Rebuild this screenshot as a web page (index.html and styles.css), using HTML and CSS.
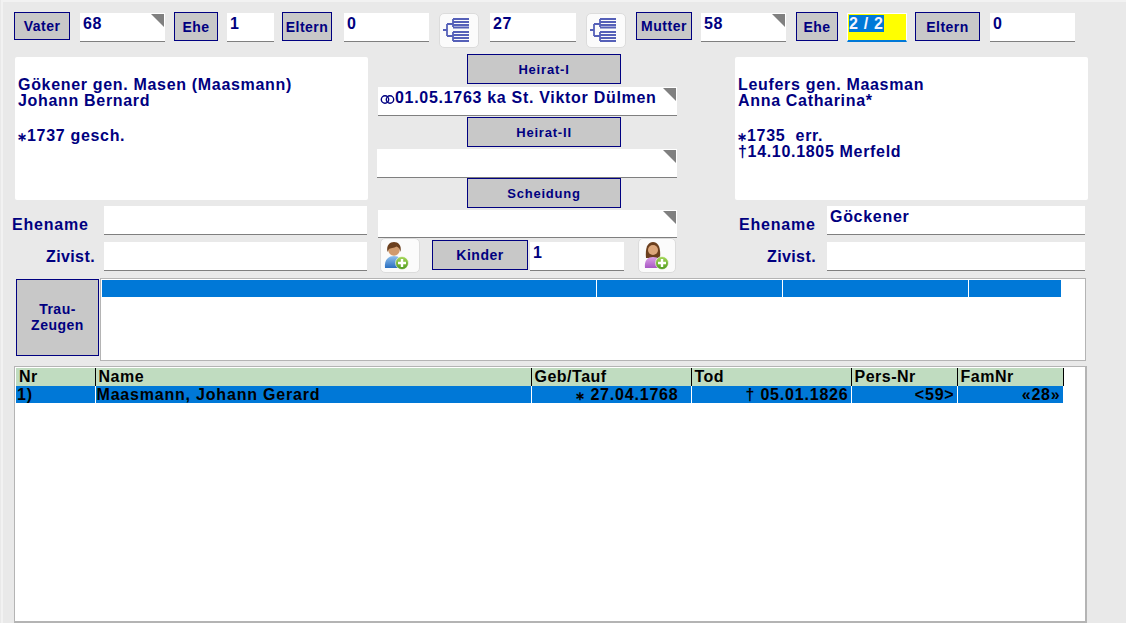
FILE: index.html
```html
<!DOCTYPE html>
<html lang="de">
<head>
<meta charset="utf-8">
<title>Familie</title>
<link rel="stylesheet" href="styles.css">
</head>
<body>
<div class="page">
  <div class="top">
    <button class="btn w-vater">Vater</button>
    <div class="field corner w-85 ml-10">68</div>
    <button class="btn w-ehe ml-9 tall">Ehe</button>
    <div class="field w-47 ml-9">1</div>
    <button class="btn w-eltern ml-8 tall">Eltern</button>
    <div class="field w-85 ml-12">0</div>
    <button class="icon w-icon ml-10"><svg class="treeicon" width="27" height="25" viewBox="0 0 27 25"><path class="tree" d="M0 12h4M4 6v12M4 6h6M4 18h6M10 1v8M10 14v9M10 1h16M10 4h16M10 7h16M10 9.500h16M10 14h16M10 17h16M10 20h16M10 23h16"/></svg></button>
    <div class="field w-86 ml-11">27</div>
    <button class="icon w-icon ml-10"><svg class="treeicon" width="27" height="25" viewBox="0 0 27 25"><path class="tree" d="M0 12h4M4 6v12M4 6h6M4 18h6M10 1v8M10 14v9M10 1h16M10 4h16M10 7h16M10 9.500h16M10 14h16M10 17h16M10 20h16M10 23h16"/></svg></button>
    <button class="btn w-vater ml-10">Mutter</button>
    <div class="field corner w-85 ml-9">58</div>
    <button class="btn w-ehe2 ml-10 tall">Ehe</button>
    <div class="field w-60 ml-9 active"><span class="sel">2 / 2</span></div>
    <button class="btn w-eltern2 ml-8 tall">Eltern</button>
    <div class="field w-85 ml-10">0</div>
  </div>

  <div class="mid">
    <div class="side left">
      <div class="person">
        <p>Gökener gen. Masen (Maasmann)<br>Johann Bernard</p>
        <p><span class="star">∗</span>1737 gesch.</p>
      </div>
      <div class="row first"><label class="lab">Ehename</label><div class="field grow"></div></div>
      <div class="row"><label class="lab right">Zivist.</label><div class="field grow"></div></div>
    </div>

    <div class="center">
      <button class="btn wide">Heirat-I</button>
      <div class="field corner cf f1"><svg class="ring" width="15" height="9" viewBox="0 0 15 9"><circle cx="5" cy="4.500" r="3.700"/><circle cx="10" cy="4.500" r="3.700"/></svg>01.05.1763 ka St. Viktor Dülmen</div>
      <button class="btn wide b2">Heirat-II</button>
      <div class="field corner cf f2"></div>
      <button class="btn wide">Scheidung</button>
      <div class="field corner cf f3"></div>
      <div class="kids">
        <button class="icon k1"><svg class="man" width="26" height="28" viewBox="0 0 26 28"><defs><linearGradient id="blue" x1="0" y1="0" x2="0" y2="1"><stop offset="0" stop-color="#8fc0ee"/><stop offset="1" stop-color="#2a6fc0"/></linearGradient><linearGradient id="grn" x1="0" y1="0" x2="0" y2="1"><stop offset="0" stop-color="#a6d85a"/><stop offset="1" stop-color="#4f9a1e"/></linearGradient></defs><path d="M1 26c-1-9 4-12 9-12s9 3 9 12z" fill="url(#blue)"/><circle cx="10" cy="8" r="5.800" fill="#d09a6c"/><path d="M3.500 10C2 3 6 0 10 0s8 3 6.500 10c-.5-3-2-5-4-5.500C10 6 6 6 5 7z" fill="#6b3f1d"/><circle cx="18" cy="21" r="6.500" fill="url(#grn)" stroke="#fff" stroke-width=".6"/><path d="M18 17v8M14 21h8" stroke="#fff" stroke-width="2.400"/></svg></button>
        <button class="btn kinder">Kinder</button>
        <div class="field kf">1</div>
        <button class="icon k2"><svg width="26" height="28" viewBox="0 0 26 28"><defs><linearGradient id="pur" x1="0" y1="0" x2="0" y2="1"><stop offset="0" stop-color="#dba2e6"/><stop offset="1" stop-color="#a857c4"/></linearGradient><linearGradient id="grn2" x1="0" y1="0" x2="0" y2="1"><stop offset="0" stop-color="#a6d85a"/><stop offset="1" stop-color="#4f9a1e"/></linearGradient></defs><path d="M2 16C1 5 4 0 9 0s8 5 7 16z" fill="#6b3f1d"/><circle cx="9" cy="8" r="5" fill="#dca67a"/><path d="M1 26c-1-8 3-11 8-11s9 3 9 11z" fill="url(#pur)"/><circle cx="18" cy="21" r="6.500" fill="url(#grn2)" stroke="#fff" stroke-width=".6"/><path d="M18 17v8M14 21h8" stroke="#fff" stroke-width="2.400"/></svg></button>
      </div>
    </div>

    <div class="side rightcol">
      <div class="person">
        <p>Leufers gen. Maasman<br>Anna Catharina*</p>
        <p><span class="star">∗</span>1735&nbsp; err.<br>†14.10.1805 Merfeld</p>
      </div>
      <div class="row first"><label class="lab">Ehename</label><div class="field grow">Göckener</div></div>
      <div class="row"><label class="lab right">Zivist.</label><div class="field grow"></div></div>
    </div>
  </div>

  <div class="trau">
    <button class="btn zeugen">Trau-<br>Zeugen</button>
    <div class="tlist">
      <div class="tbar"><span class="t1"></span><span class="t2"></span><span class="t2"></span><span class="t3"></span></div>
    </div>
  </div>

  <div class="tablebox">
    <table>
      <colgroup><col class="c1"><col class="c2"><col class="c3"><col class="c3"><col class="c4"><col class="c4"></colgroup>
      <thead><tr><th>Nr</th><th>Name</th><th>Geb/Tauf</th><th>Tod</th><th>Pers-Nr</th><th>FamNr</th></tr></thead>
      <tbody><tr><td>1)</td><td>Maasmann, Johann Gerard</td><td class="r pad"><span class="star">∗</span> 27.04.1768</td><td class="r">† 05.01.1826</td><td class="r">&lt;59&gt;</td><td class="r">«28»</td></tr></tbody>
    </table>
  </div>
</div>
</body>
</html>
```

FILE: styles.css
```css
* { box-sizing: border-box; }
html, body { margin: 0; height: 623px; overflow: hidden; }
body { background: #e9e9e9; font-family: "Liberation Sans", Arial, sans-serif; color: #000080; }
.page { padding: 10px 0 0 11px; height: 623px; margin-left: 1px; border-top: 2px solid #f2f2f2; border-left: 2px solid #f2f2f2; }
button { font-family: inherit; padding: 0; margin: 0; cursor: default; }

.top { display: flex; align-items: flex-start; height: 42px; }
.btn { background: #c8c8c8; border: 1px solid #000080; color: #000080; font-weight: bold; font-size: 14px; height: 28px; letter-spacing: .5px; }
.btn.tall { height: 29px; }
.field { position: relative; background: #fff; border-bottom: 1px solid #7f7f7f; height: 29px; margin-top: 1px; padding: 1px 3px 0; font-size: 16px; font-weight: bold; line-height: 20px; letter-spacing: .7px; color: #000080; }
.corner::after { content: ""; position: absolute; top: 1px; right: 1px; width: 13px; height: 13px; background: #808080; clip-path: polygon(0 0, 100% 0, 100% 100%); }
.icon { width: 40px; height: 35px; margin-top: 1px; background: #fbfbfb; border: 1px solid #dcdcdc; border-radius: 5px; display: flex; align-items: center; justify-content: center; }
.treeicon { margin-right: 6px; }
.tree { fill: none; stroke: #5560b8; stroke-width: 1.800; }

.w-vater { width: 56px; } .w-ehe { width: 44px; } .w-eltern { width: 50px; } .w-ehe2 { width: 42px; } .w-eltern2 { width: 65px; }
.w-85 { width: 85px; } .w-86 { width: 86px; } .w-47 { width: 47px; } .w-60 { width: 60px; } .w-icon { width: 40px; }
.ml-8 { margin-left: 8px; } .ml-9 { margin-left: 9px; } .ml-10 { margin-left: 10px; } .ml-11 { margin-left: 11px; } .ml-12 { margin-left: 12px; }
.active { background: #ffff00; border: 1px solid #fff; border-bottom: 2px solid #0078d7; padding: 0 0 0 1px; }
.sel { background: #0078d7; color: #f4f4ff; display: inline-block; line-height: 17px; height: 17px; vertical-align: top; margin-top: 1px; }

.mid { display: flex; margin-left: -2px; }
.side { width: 356px; }
.person { background: #fff; margin-left: 3px; width: 353px; height: 143px; margin-top: 3px; padding: 20px 3px 0; font-size: 16px; font-weight: bold; line-height: 16px; letter-spacing: .68px; border-radius: 2px; }
.person p { margin: 0 0 19px; }
.star { font-size: 12px; letter-spacing: 0; margin-left: -1px; line-height: 0; }
.row { display: flex; margin-top: 7px; height: 29px; }
.row.first { margin-top: 6px; }
.lab { width: 92px; font-size: 16px; font-weight: bold; line-height: 38px; letter-spacing: .8px; flex: none; white-space: nowrap; }
.lab.right { text-align: right; padding-right: 9px; line-height: 30px; letter-spacing: .4px; }
.grow { flex: 1; margin-top: 0; }
.left .grow { margin-right: 1px; }

.center { width: 300px; margin-left: 9px; }
.wide { display: block; width: 154px; height: 30px; margin-left: 90px; font-size: 13px; letter-spacing: .8px; }
.cf { margin-left: 1px; width: 299px; margin-top: 3px; padding: 0 0 0 2px; line-height: 21px; height: 29px; }
.b2 { margin-top: 1px; }
.f2 { margin-top: 2px; margin-left: 0; width: 300px; height: 29px; }
.f3 { margin-top: 2px; height: 28px; }
.ring { fill: none; stroke: #000080; stroke-width: 1.400; vertical-align: -1px; }
.kids { display: flex; align-items: flex-start; height: 35px; }
.kids .icon { margin-top: 0; }
.k1 { margin-left: 3px; }
.man { margin-right: 6px; }
.kinder { width: 96px; height: 30px; margin: 2px 0 0 12px; }
.kf { width: 94px; margin: 4px 0 0 2px; }
.k2 { width: 38px; margin-left: 14px; }

.rightcol { margin-left: 55px; }
.rightcol .grow { margin-right: 3px; }
.rightcol .lab { padding-left: 7px; width: 95px; }
.rightcol .lab.right { padding-right: 11px; padding-left: 0; }

.trau { display: flex; align-items: flex-start; margin: 5px 0 0 2px; height: 83px; }
.zeugen { width: 83px; height: 77px; margin-top: 1px; font-size: 14px; line-height: 16px; padding-bottom: 2px; }
.tlist { width: 986px; height: 83px; margin-left: 1px; background: #fff; border: 1px solid #b4b4b4; padding: 1px; }
.tbar { display: flex; width: 959px; height: 17px; background: #0078d7; }
.tbar span { border-right: 1px solid #fff; height: 17px; }
.t1 { width: 495px; } .t2 { width: 186px; } .t3 { width: 92px; border-right: 0 !important; }

.tablebox { width: 1073px; height: 257px; margin-top: 5px; background: #fff; border: 1px solid #b4b4b4; border-width: 1px 2px 2px 1px; padding: 1px; }
table { border-collapse: collapse; table-layout: fixed; width: 1047px; color: #000; font-size: 16px; font-weight: bold; }
.c1 { width: 79px; } .c2 { width: 436px; } .c3 { width: 160px; } .c4 { width: 106px; }
th { background: #c0dcc0; height: 18px; padding: 0 2px 0 3px; text-align: left; border-right: 1px solid #000; font-size: 16px; letter-spacing: .5px; line-height: 18px; overflow: hidden; font-weight: bold; }
td { background: #0078d7; height: 17px; padding: 0 2px 0 1px; border-right: 1px solid #fff; line-height: 16px; white-space: nowrap; letter-spacing: .8px; }
.r { text-align: right; }
.pad { padding-right: 12px; }
```
